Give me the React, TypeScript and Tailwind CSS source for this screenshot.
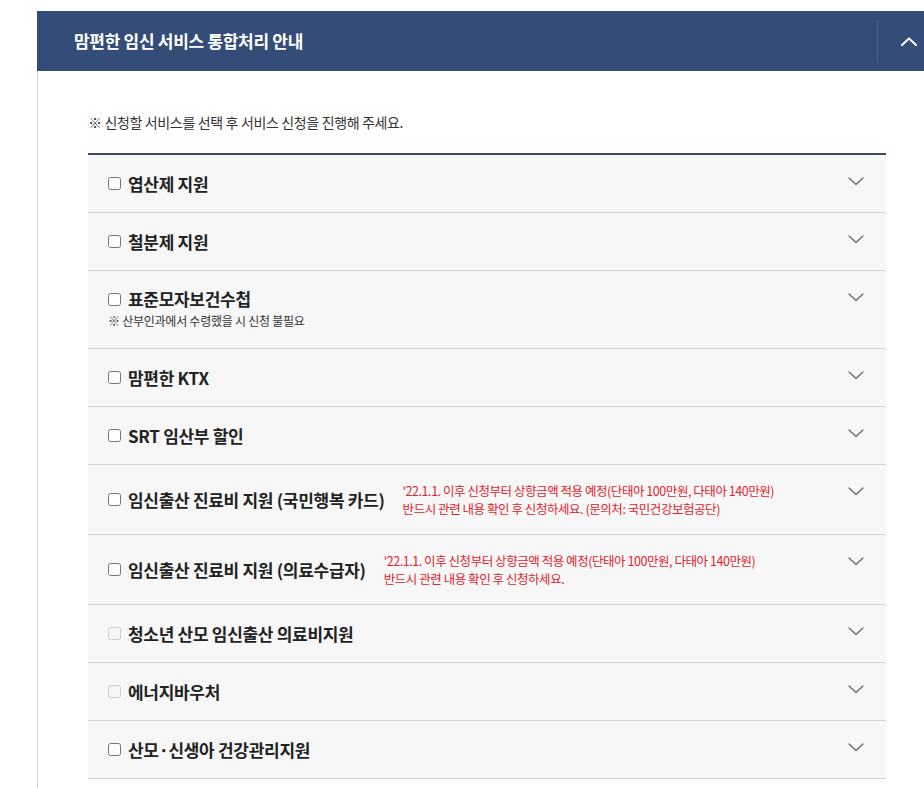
import type { ReactNode } from "react";

type Service = {
  title: string;
  note?: string;
  warn?: string[];
  disabled?: boolean;
};

const SERVICES: Service[] = [
  { title: "엽산제 지원" },
  { title: "철분제 지원" },
  { title: "표준모자보건수첩", note: "※ 산부인과에서 수령했을 시 신청 불필요" },
  { title: "맘편한 KTX" },
  { title: "SRT 임산부 할인" },
  {
    title: "임신출산 진료비 지원 (국민행복 카드)",
    warn: [
      "'22.1.1. 이후 신청부터 상향금액 적용 예정(단태아 100만원, 다태아 140만원)",
      "반드시 관련 내용 확인 후 신청하세요. (문의처: 국민건강보험공단)",
    ],
  },
  {
    title: "임신출산 진료비 지원 (의료수급자)",
    warn: [
      "'22.1.1. 이후 신청부터 상향금액 적용 예정(단태아 100만원, 다태아 140만원)",
      "반드시 관련 내용 확인 후 신청하세요.",
    ],
  },
  { title: "청소년 산모 임신출산 의료비지원", disabled: true },
  { title: "에너지바우처", disabled: true },
  { title: "산모·신생아 건강관리지원" },
];

function Chevron({ up = false, className = "" }: { up?: boolean; className?: string }) {
  return (
    <svg width="16" height="9" viewBox="0 0 16 9" fill="none" className={className}>
      <path
        d={up ? "M1 8L8 1.5L15 8" : "M1 1L8 7.5L15 1"}
        stroke="currentColor"
        strokeWidth={up ? 2 : 1.3}
        strokeLinecap="round"
        strokeLinejoin="round"
      />
    </svg>
  );
}

function Row({ item }: { item: Service }): ReactNode {
  const tall = item.note || item.warn;
  return (
    <li className="flex border-b border-[#d2d2d2] bg-[#f7f7f7] pl-[20px] pr-[22px]">
      <div
        className={`flex flex-1 ${item.note ? "flex-col justify-center pt-[16px] pb-[18px]" : "items-center"} ${
          tall ? "min-h-[69px]" : "min-h-[57px]"
        }`}
      >
        <label className="flex items-center">
          <input type="checkbox" disabled={item.disabled} className="m-0 h-[13px] w-[13px]" />
          <span className="ml-[7px] text-[17px] font-bold leading-[24px] tracking-[-0.3px] text-[#222]">
            {item.title}
          </span>
          {item.warn ? (
            <span className="ml-[18px] flex flex-col text-[12.5px] leading-[18px] tracking-[-0.45px] text-[#e5222b]">
              {item.warn.map((line) => (
                <span key={line}>{line}</span>
              ))}
            </span>
          ) : null}
        </label>
        {item.note ? (
          <p className="mt-[1px] text-[12px] leading-[18px] tracking-[-0.25px] text-[#333]">{item.note}</p>
        ) : null}
      </div>
      <button type="button" className="mt-[22px] self-start text-[#666]">
        <Chevron />
      </button>
    </li>
  );
}

export default function App() {
  return (
    <div
      className="min-h-screen w-full overflow-hidden bg-white pt-[11px]"
      style={{ fontFamily: '"Noto Sans CJK KR", "Noto Sans", sans-serif' }}
    >
      <section className="ml-[37px] w-[902px]">
        <header className="flex h-[60px] items-center justify-between bg-[#344d78] pl-[37px]">
          <h2 className="text-[17px] font-bold tracking-[-0.3px] text-white">맘편한 임신 서비스 통합처리 안내</h2>
          <button
            type="button"
            className="flex h-[42px] w-[62px] items-center justify-center border-l border-[#4f6590] text-white"
          >
            <Chevron up />
          </button>
        </header>

        <div className="min-h-[717px] border-l border-[#d4d4d4] pl-[50px] pt-[41px]">
          <p className="text-[14px] leading-[20px] tracking-[-0.35px] text-[#333]">
            ※ 신청할 서비스를 선택 후 서비스 신청을 진행해 주세요.
          </p>
          <ul className="mt-[21px] w-[798px] border-t-2 border-[#3a4a66]">
            {SERVICES.map((item) => (
              <Row key={item.title} item={item} />
            ))}
          </ul>
        </div>
      </section>
    </div>
  );
}
